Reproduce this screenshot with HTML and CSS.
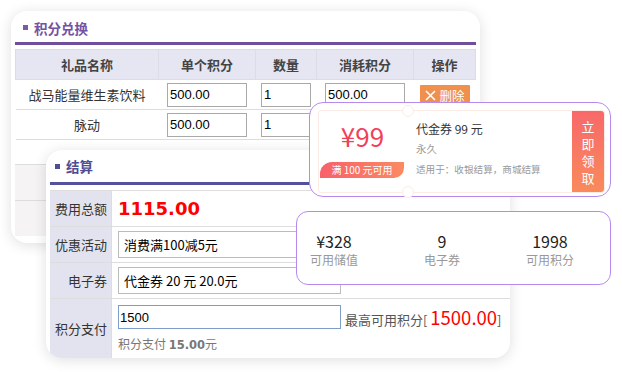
FILE: index.html
```html
<!DOCTYPE html>
<html>
<head>
    <title>积分兑换与结算</title>
    <link rel="stylesheet" href="styles.css">
</head>
<body>
    <div class="stage">
        <!-- 积分兑换 -->
        <div class="card card-exchange">
            <div class="card-title exchange-title"><span class="dot"></span>积分兑换</div>
            <table class="gift-table">
                <thead>
                    <tr>
                        <th class="c1">礼品名称</th>
                        <th class="c2">单个积分</th>
                        <th class="c3">数量</th>
                        <th class="c4">消耗积分</th>
                        <th class="c5">操作</th>
                    </tr>
                </thead>
                <tbody>
                    <tr>
                        <td>战马能量维生素饮料</td>
                        <td><input class="txt w80" value="500.00"></td>
                        <td><input class="txt w50" value="1"></td>
                        <td><input class="txt w80" value="500.00"></td>
                        <td>
                            <span class="btn-del">
                                <svg width="11" height="11" viewBox="0 0 11 11"><path d="M1 1L10 10M10 1L1 10" stroke="#fff" stroke-width="1.6"/></svg>
                                删除
                            </span>
                        </td>
                    </tr>
                    <tr>
                        <td>脉动</td>
                        <td><input class="txt w80" value="500.00"></td>
                        <td><input class="txt w50" value="1"></td>
                        <td><input class="txt w80" value="500.00"></td>
                        <td>
                            <span class="btn-del">
                                <svg width="11" height="11" viewBox="0 0 11 11"><path d="M1 1L10 10M10 1L1 10" stroke="#fff" stroke-width="1.6"/></svg>
                                删除
                            </span>
                        </td>
                    </tr>
                </tbody>
            </table>
            <div class="sum-rows">
                <div class="sum-row"></div>
                <div class="sum-row"></div>
            </div>
        </div>

        <!-- 结算 -->
        <div class="card card-settle">
            <div class="card-title settle-title"><span class="dot"></span>结算</div>
            <div class="settle-grid">
                <div class="label">费用总额</div>
                <div class="value"><span class="total">1115.00</span></div>

                <div class="label">优惠活动</div>
                <div class="value"><div class="select">消费满100减5元</div></div>

                <div class="label">电子券</div>
                <div class="value"><div class="select">代金券 20 元 20.0元</div></div>

                <div class="label">积分支付</div>
                <div class="value value-pay">
                    <div class="pay-line">
                        <input class="pay-input" value="1500">
                        <span class="max">最高可用积分[ <em>1500.00</em>]</span>
                    </div>
                    <div class="pay-note">积分支付 <b>15.00</b>元</div>
                </div>
            </div>
        </div>

        <!-- 代金券 -->
        <div class="coupon">
            <div class="ticket">
                <div class="tk-left">
                    <div class="price">¥99</div>
                    <div class="limit">满 100 元可用</div>
                </div>
                <div class="tk-mid">
                    <div class="tk-name">代金券 99 元</div>
                    <div class="tk-time">永久</div>
                    <div class="tk-scope">适用于：收银结算，商城结算</div>
                </div>
                <div class="tk-btn">立即领取</div>
            </div>
        </div>

        <!-- 资产 -->
        <div class="assets">
            <div class="asset">
                <div class="num">¥328</div>
                <div class="name">可用储值</div>
            </div>
            <div class="asset">
                <div class="num">9</div>
                <div class="name">电子券</div>
            </div>
            <div class="asset">
                <div class="num">1998</div>
                <div class="name">可用积分</div>
            </div>
        </div>
    </div>
</body>
</html>
```

FILE: styles.css
```css
body {
    margin: 0;
    background: #fff;
    font-family: "Noto Sans CJK SC", "Liberation Sans", sans-serif;
    font-size: 13px;
    color: #333;
}

.stage {
    position: relative;
    width: 622px;
    height: 372px;
    overflow: hidden;
}

.card {
    position: absolute;
    background: #fff;
    border-radius: 16px;
    box-shadow: 0 2px 14px rgba(0, 0, 0, 0.13);
    box-sizing: border-box;
    overflow: hidden;
}

.card-exchange {
    left: 11px;
    top: 11px;
    width: 469px;
    height: 232px;
    padding: 0 4px;
}

.card-settle {
    left: 46px;
    top: 150px;
    width: 464px;
    height: 208px;
    padding: 0 0 0 4px;
}

.card-title {
    display: flex;
    align-items: center;
    font-weight: bold;
    font-size: 13.5px;
    box-sizing: border-box;
}

.card-title .dot {
    width: 5px;
    height: 5px;
    margin: 0 6px 0 0;
}

.exchange-title {
    height: 34px;
    padding: 2px 0 0 8px;
    color: #7452a3;
    border-bottom: 3px solid #6f4f9c;
}

.exchange-title .dot {
    background: #7b5ba6;
}

.settle-title {
    height: 35px;
    padding: 0 0 0 5px;
    color: #4f4d93;
    border-bottom: 3px solid #55529b;
}

.settle-title .dot {
    background: #4e4d96;
}

/* 礼品表格 */
.gift-table {
    width: 461px;
    margin-top: 4px;
    border-collapse: collapse;
    table-layout: fixed;
}

.gift-table th,
.gift-table td {
    text-align: center;
    padding: 0;
    border-bottom: 1px solid #ddd;
}

.gift-table th {
    height: 29px;
    background: #e6e6f2;
    color: #444;
    font-weight: bold;
    font-size: 13px;
    border: 1px solid #dcdce6;
}

.gift-table td {
    height: 29px;
    color: #333;
}

.c1 { width: 142px; }
.c2 { width: 96px; }
.c3 { width: 60px; }
.c4 { width: 96px; }
.c5 { width: 61px; }

.txt {
    display: block;
    margin: 0 auto;
    height: 24px;
    box-sizing: border-box;
    border: 1px solid #a9a9a9;
    padding: 0 2px;
    font-family: "Liberation Sans", sans-serif;
    font-size: 13px;
    color: #000;
}

.w80 { width: 80px; }
.w50 { width: 50px; }

.btn-del {
    display: inline-flex;
    align-items: center;
    gap: 4px;
    width: 50px;
    height: 20px;
    box-sizing: border-box;
    padding-left: 5px;
    background: #f0904c;
    color: #fff;
    font-size: 12.5px;
    border-radius: 1px;
    vertical-align: middle;
}

.sum-rows {
    margin-top: 24px;
}

.sum-row {
    height: 35px;
    background: #f5f3f3;
    border-top: 1px solid #ddd;
}

/* 结算 */
.settle-grid {
    display: grid;
    grid-template-columns: 61px 1fr;
    grid-template-rows: 36px 36px 36px 60px;
    margin-top: 5px;
    border-top: 1px solid #ddd;
}

.settle-grid .label {
    background: #e3e3f0;
    display: flex;
    align-items: center;
    justify-content: flex-end;
    padding-right: 4px;
    color: #333;
    font-size: 13px;
    border-bottom: 1px solid #ddd;
}

.settle-grid .value {
    display: flex;
    align-items: center;
    padding-left: 6px;
    border-bottom: 1px solid #ddd;
    border-left: 1px solid #ddd;
}

.total {
    color: #ff0000;
    font-family: "DejaVu Sans", sans-serif;
    font-weight: bold;
    font-size: 18px;
}

.select {
    width: 223px;
    height: 27px;
    box-sizing: border-box;
    border: 1px solid #bbb;
    display: flex;
    align-items: center;
    padding-left: 5px;
    font-size: 13px;
    color: #000;
}

.value-pay {
    flex-direction: column;
    align-items: flex-start !important;
    justify-content: flex-start;
    padding-top: 5px;
    border-bottom: none !important;
}

.pay-line {
    display: flex;
    align-items: center;
}

.pay-input {
    width: 223px;
    height: 24px;
    box-sizing: border-box;
    border: 1px solid #7f9dc9;
    padding: 0 1px;
    font-family: "Liberation Sans", sans-serif;
    font-size: 13px;
    color: #000;
}

.max {
    margin-left: 4px;
    color: #555;
    font-size: 13px;
}

.max em {
    font-style: normal;
    color: #ff0000;
    font-size: 18.5px;
}

.pay-note {
    margin-top: 5px;
    color: #777;
    font-size: 12px;
}

.pay-note b {
    font-family: "DejaVu Sans", sans-serif;
    font-size: 11.5px;
}

/* 代金券 */
.coupon {
    position: absolute;
    left: 309px;
    top: 102px;
    width: 302px;
    height: 95px;
    box-sizing: border-box;
    padding: 7px 5px 5px 8px;
    background: #fff;
    border: 1.5px solid #b689ee;
    border-radius: 14px;
}

.ticket {
    position: relative;
    display: flex;
    height: 81px;
    border: 1px solid #fdebe6;
    border-radius: 3px;
}

.ticket::before,
.ticket::after {
    content: "";
    position: absolute;
    left: 83px;
    width: 10px;
    height: 10px;
    border-radius: 50%;
    background: #fff;
    border: 1px solid #fdebe6;
}

.ticket::before { top: -6px; }
.ticket::after { bottom: -6px; }

.tk-left {
    width: 87px;
    display: flex;
    flex-direction: column;
    align-items: center;
}

.price {
    margin-top: 10px;
    color: #f2405a;
    font-size: 26px;
    line-height: 30px;
    font-family: "Noto Sans CJK SC", sans-serif;
}

.limit {
    margin-top: 11px;
    align-self: flex-start;
    margin-left: 1px;
    width: 84px;
    height: 16px;
    line-height: 16px;
    text-align: center;
    color: #fff;
    font-size: 10px;
    background: linear-gradient(90deg, #f8606a, #fb8a62);
    border-radius: 12px 0 10px 0;
}

.tk-mid {
    flex: 1;
    padding: 9px 0 0 10px;
}

.tk-name {
    color: #333;
    font-size: 12px;
    line-height: 18px;
}

.tk-time {
    margin-top: 3px;
    color: #9a9a9a;
    font-size: 10.5px;
    line-height: 16px;
}

.tk-scope {
    margin-top: 4px;
    color: #9a9a9a;
    font-size: 9.6px;
    line-height: 16px;
}

.tk-btn {
    width: 32px;
    box-sizing: border-box;
    padding: 0 9px;
    display: flex;
    align-items: center;
    justify-content: center;
    text-align: center;
    color: #fff;
    font-size: 13px;
    line-height: 17px;
    background: linear-gradient(180deg, #f7696a, #f98a5b);
    border-radius: 0 3px 3px 0;
}

/* 资产 */
.assets {
    position: absolute;
    left: 296px;
    top: 211px;
    width: 315px;
    height: 74px;
    box-sizing: border-box;
    padding-top: 19px;
    display: flex;
    gap: 34px;
    background: #fff;
    border: 1.5px solid #b689ee;
    border-radius: 12px;
}

.asset {
    width: 74px;
    text-align: center;
}

.asset .num {
    color: #222;
    font-size: 16px;
    line-height: 20px;
}

.asset .name {
    color: #999;
    font-size: 12px;
    line-height: 18px;
}
```
